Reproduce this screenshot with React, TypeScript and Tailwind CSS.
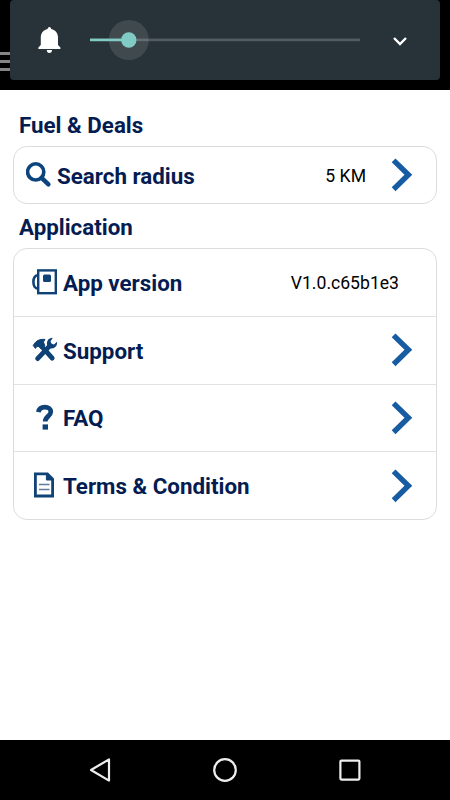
import { ReactNode } from "react";

function SearchIcon() {
  return (
    <svg width={26} height={26} viewBox="0 0 26 26" fill="none" stroke="#0c457e">
      <circle cx={9.7} cy={9.9} r={8.1} strokeWidth={3.6} />
      <path d="M15.6 15.8 22.4 22.4" strokeWidth={4.4} strokeLinecap="round" />
    </svg>
  );
}

function PumpIcon() {
  return (
    <svg width={26} height={26} viewBox="0 0 26 26" fill="none" stroke="#0f4276">
      <rect x={6.2} y={1.4} width={17.6} height={22.8} strokeWidth={2.4} />
      <path d="M6 6.2C3.2 6.2 1.4 8.8 1.4 12.8s1.8 6.8 4.6 6.8" strokeWidth={2.6} />
      <rect x={11} y={5.5} width={8} height={7.5} rx={1.5} fill="#0f4276" stroke="none" />
    </svg>
  );
}

function ToolsIcon() {
  return (
    <svg width={26} height={26} viewBox="0 0 26 26" fill="none">
      <path
        d="M1.2 8.4 3.6 5.2C5.4 3 9 2 13 2.4L11.4 5 12.8 8.4 9.2 12 6.8 9.4 4.8 9.6 3.4 11.4Z"
        fill="#0f4276"
        stroke="#0f4276"
        strokeLinejoin="round"
      />
      <path d="M8.8 8.4 20.2 21.2" stroke="#0f4276" strokeWidth={4.8} strokeLinecap="round" />
      <path d="M18.2 8.4 5.6 21.6" stroke="#0f4276" strokeWidth={4.8} strokeLinecap="round" />
      <path
        d="M20.8 .8C16.6 .6 14.2 4.4 15.2 8.2L18 11.2C22 12.2 25.6 9.6 25 4.8L22 7.6 19.2 6.8 18.6 4.2Z"
        fill="#0f4276"
      />
    </svg>
  );
}

function QuestionIcon() {
  return (
    <svg width={26} height={26} viewBox="0 0 26 26" fill="none">
      <path
        d="M6.4 8.2C7 4.8 9.6 3.2 12.8 3.2c3.6 0 6 1.6 6 4.6 0 4.4-5.6 4.4-5.6 9.8"
        stroke="#0f4276"
        strokeWidth={4.7}
      />
      <rect x={10.6} y={20.4} width={5.4} height={5.2} fill="#0f4276" />
    </svg>
  );
}

function DocumentIcon() {
  return (
    <svg width={26} height={26} viewBox="0 0 26 26" fill="none" stroke="#0f4276">
      <path d="M3.4 1.8H15.4L20.6 7V24H3.4Z" strokeWidth={2.8} />
      <path d="M14.4 2V8H21Z" fill="#0f4276" strokeWidth={1} />
      <path d="M7 12.5H17.5M7 17.5H17.5" strokeWidth={1.5} stroke="#5b7fa3" />
    </svg>
  );
}

function Chevron() {
  return (
    <svg
      className="absolute right-[23px] -mt-px"
      width={22}
      height={34}
      viewBox="0 0 22 34"
      fill="none"
    >
      <path d="M2.6 2.4 17.4 16.8 2.6 31.2" stroke="#175ca3" strokeWidth={5.4} />
    </svg>
  );
}

function Row({
  icon,
  label,
  value,
  className,
  arrow = true,
}: {
  icon: ReactNode;
  label: string;
  value?: string;
  className: string;
  arrow?: boolean;
}) {
  return (
    <div className={`relative flex items-center ${className}`}>
      <span className="-mt-0.5">{icon}</span>
      <span className="ml-[5px] mt-0.5 text-[22.35px] font-bold">{label}</span>
      {value && <span className="ml-auto mt-px text-[17.6px] text-black">{value}</span>}
      {arrow && <Chevron />}
    </div>
  );
}

export default function App() {
  return (
    <div className="flex h-[800px] w-[450px] flex-col bg-white font-['Roboto',sans-serif] text-[#041c51]">
      <header className="relative h-[90px] bg-black">
        <div className="flex flex-col gap-[5px] pt-[52px]">
          <div className="h-[3px] w-[10px] bg-[#858585]" />
          <div className="h-[3px] w-[10px] bg-[#858585]" />
          <div className="h-[3px] w-[10px] bg-[#858585]" />
        </div>

        <div className="absolute left-[10px] top-0 flex h-20 w-[430px] items-center rounded-sm bg-[#283339]">
          <svg className="ml-7" width={24} height={28} viewBox="0 0 24 28" fill="#fff">
            <path d="M11.4 1C12.6 1 13 2 13.2 3 17.6 4 20 7.2 20 11.5V19l2.4 2.6V23H.4V21.6L2.8 19V11.5C2.8 7.2 5.2 4 9.6 3 9.8 2 10.2 1 11.4 1Z" />
            <path d="M8.8 24H14C14 25.8 13 27 11.4 27S8.8 25.8 8.8 24Z" />
          </svg>
          <svg className="ml-7" width={270} height={40} viewBox="0 0 270 40">
            <rect x={0} y={18.6} width={270} height={2.6} fill="#535c61" />
            <circle cx={38.8} cy={20} r={20} fill="#fff" fillOpacity={0.11} />
            <rect x={0} y={18.6} width={39} height={2.6} fill="#80cbc4" />
            <circle cx={38.8} cy={20} r={7.7} fill="#80cbc4" />
          </svg>
          <svg className="ml-8" width={16} height={12} viewBox="0 0 16 12" fill="none">
            <path d="M2 4 8 10 14 4" stroke="#fff" strokeWidth={2.4} />
          </svg>
        </div>
      </header>

      <main className="flex-1 px-[13px] pt-[19px]">
        <h2 className="pl-1.5 text-[22.35px] font-bold leading-8">Fuel &amp; Deals</h2>
        <section className="mt-[5px] h-[58px] rounded-[14px] border border-[#dcdcdc]">
          <Row
            icon={<SearchIcon />}
            label="Search radius"
            value="5 KM"
            className="h-[57px] pl-3 pr-[70px]"
          />
        </section>

        <h2 className="mt-[7px] pl-1.5 text-[22.35px] font-bold leading-8">Application</h2>
        <section className="mt-[5px] h-[272px] divide-y divide-[#e2e2e2] rounded-[14px] border border-[#dcdcdc]">
          <Row
            icon={<PumpIcon />}
            label="App version"
            value="V1.0.c65b1e3"
            className="h-[68px] pl-[18px] pr-[37px]"
            arrow={false}
          />
          <Row icon={<ToolsIcon />} label="Support" className="h-[68px] pl-[18px]" />
          <Row icon={<QuestionIcon />} label="FAQ" className="h-[67px] pl-[18px]" />
          <Row icon={<DocumentIcon />} label="Terms &amp; Condition" className="h-[68px] pl-[18px]" />
        </section>
      </main>

      <nav className="flex h-[60px] items-center justify-between bg-black px-[88px]">
        <svg width={24} height={26} viewBox="0 0 24 26" fill="none">
          <path d="M21 2.4V23.6L3 13Z" stroke="#eee" strokeWidth={2.2} strokeLinejoin="round" />
        </svg>
        <svg width={24} height={24} viewBox="0 0 24 24" fill="none">
          <circle cx={12} cy={12} r={10.8} stroke="#eee" strokeWidth={2.2} />
        </svg>
        <svg width={24} height={24} viewBox="0 0 24 24" fill="none">
          <rect x={2.4} y={2.6} width={19} height={19} rx={1} stroke="#eee" strokeWidth={2.2} />
        </svg>
      </nav>
    </div>
  );
}
